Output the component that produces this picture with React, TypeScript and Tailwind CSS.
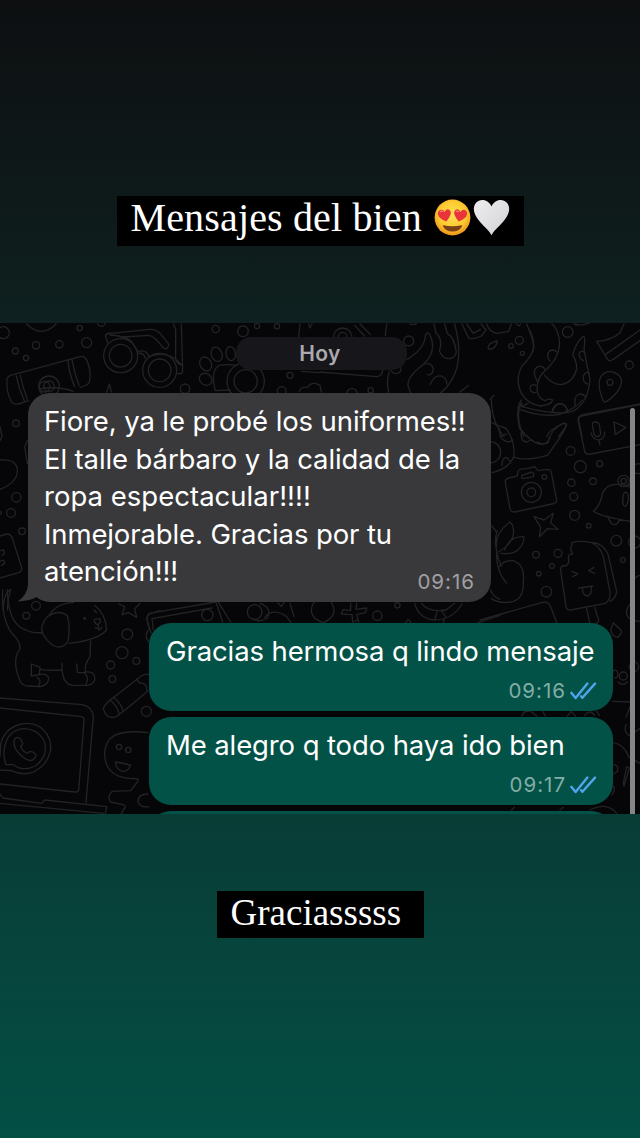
import type { ReactNode } from 'react';

type Dot = [number, number, number];

function Dots({ items }: { items: Dot[] }) {
  return (
    <>
      {items.map(([x, y, r]) => (
        <circle key={`${x}-${y}`} cx={x} cy={y} r={r} />
      ))}
    </>
  );
}

function Region({ x, y, children }: { x: number; y: number; children: ReactNode }) {
  return <g transform={`translate(${x} ${y}) scale(0.33333)`}>{children}</g>;
}

function Doodles() {
  return (
    <svg
      className="col-start-1 row-start-1 h-[491px] w-[640px]"
      viewBox="0 323 640 491"
      fill="none"
      stroke="#232326"
      strokeWidth="4"
      strokeLinecap="round"
      strokeLinejoin="round"
      aria-hidden="true"
    >
      {/* Upper left: candy, glasses, paw */}
      <Region x={0} y={320}>
        <Dots
          items={[
            [10, 38, 18], [239, 24, 8], [304, 8, 11], [108, 76, 11], [178, 73, 11], [260, 68, 15],
            [46, 93, 9], [78, 114, 8], [362, 107, 51], [362, 107, 34], [479, 151, 51], [479, 151, 34],
            [647, 27, 11], [729, 34, 16], [771, 18, 8], [831, 19, 8], [555, 206, 14], [737, 184, 56],
            [737, 184, 35], [870, 166, 9], [845, 213, 13], [147, 199, 31], [147, 199, 16],
          ]}
        />
        <path d="M80 12Q124 56 168 12M21 184Q18 172 32 166L240 110Q252 106 259 118Q276 152 268 186Q264 196 240 202M21 184Q18 214 35 246Q40 254 55 252L86 242M49 168Q56 204 73 242M61 166Q68 202 82 238M204 122Q207 160 224 200M216 118Q223 160 237 196M120 206Q180 198 220 214" />
        <path d="M316 49Q318 38 334 40L450 28Q466 27 480 40L503 68Q510 78 500 85Q492 90 484 76Q462 48 446 46L370 51M316 49L324 70M330 45Q378 48 396 66L412 94Q440 88 447 110M412 100Q432 98 436 114M520 12L527 28L527 112Q524 122 540 134M544 12L548 154Q546 164 530 160M447 110Q486 92 526 116L546 136M320 216L328 192L334 216" />
        <path d="M646 212Q632 158 652 140Q662 130 712 136M646 212L690 210" />
        <ellipse cx="617" cy="132" rx="17" ry="22" transform="rotate(-28 617 132)" />
        <ellipse cx="650" cy="103" rx="16" ry="22" transform="rotate(-20 650 103)" />
        <ellipse cx="692" cy="101" rx="14" ry="21" transform="rotate(-8 692 101)" />
        <ellipse cx="617" cy="178" rx="20" ry="17" transform="rotate(38 617 178)" />
        <path d="M896 50L900 12M926 12L930 24L936 12M898 214Q904 198 922 202Q936 182 960 196M904 154L960 158" />
      </Region>

      {/* Upper right: octopus, pin, voice note */}
      <Region x={320} y={320}>
        <Dots
          items={[
            [68, 52, 28], [68, 50, 13], [266, 63, 15], [228, 146, 15], [598, 61, 12], [573, 78, 7],
            [607, 100, 6], [743, 36, 16], [928, 135, 12], [870, 187, 9], [96, 222, 16], [152, 211, 8],
          ]}
        />
        <path d="M104 16L134 48M120 12L152 44M270 12L282 14L290 10M0 156L170 170Q188 168 188 150M200 12L196 46M262 118Q314 86 316 48Q320 32 330 44Q352 92 312 132Q260 170 264 198L272 218M208 154Q198 184 206 216M342 12L348 40Q370 58 358 92Q370 122 396 114Q412 104 408 92Q404 54 382 40L374 12M404 12Q432 120 396 178Q380 206 362 218M420 216L446 196M510 238L522 226M330 194Q342 164 364 168Q382 176 380 192M318 132Q334 126 340 148Q336 168 322 164M0 196L4 216" />
        <path d="M426 12L446 54Q458 60 484 48L498 30L484 12M440 12L460 40L482 28M500 12Q508 38 534 40L566 34L574 12M588 12L598 18L602 12M504 82Q506 72 518 68L532 62Q528 88 508 88Z" />
        <path d="M620 12Q636 48 642 80Q636 110 606 138Q588 170 598 204Q612 250 662 258Q694 254 698 240Q690 234 674 242Q646 230 652 196Q654 170 680 148Q724 104 718 58Q712 24 696 12M674 166Q698 194 724 194Q762 186 770 146Q770 122 758 106Q766 70 788 50Q798 44 792 88Q800 130 810 180Q804 246 762 272Q718 290 606 260L604 248Q588 282 602 326L612 350M606 260L624 250" />
        <path d="M654 186Q634 156 650 142Q666 132 676 150M690 124Q676 104 690 92Q704 86 712 98M646 218Q632 220 630 204Q632 190 648 196M790 122Q776 114 778 100Q782 90 792 96M804 192Q788 190 790 168Q798 152 808 160M766 256Q760 230 778 222Q792 222 798 234M696 274Q704 246 728 252Q744 260 740 276M630 32Q646 64 638 96M762 12Q782 18 806 10M830 64Q872 62 900 38L912 12M830 64L864 120Q870 126 880 118L960 62M856 104L960 30M850 242Q830 198 842 170Q860 148 884 158Q914 172 900 202Q888 226 860 244Q852 248 850 242M960 254L784 288Q774 292 776 302L786 350M680 350Q686 330 730 310Q742 308 736 322L716 350" />
        <path d="M514 238Q516 310 552 350M540 350L560 342" />
      </Region>

      {/* Right edge: mic note, camera, bell, ice pop */}
      <Region x={480} y={400}>
        <Dots
          items={[
            [272, 153, 13], [301, 200, 18], [359, 191, 9], [274, 248, 11], [339, 244, 10], [281, 290, 12],
            [284, 346, 15], [326, 377, 7], [154, 277, 30], [154, 277, 13], [193, 231, 7], [409, 422, 16],
            [464, 426, 18], [429, 480, 7], [168, 464, 10], [234, 460, 12], [216, 498, 7], [176, 521, 7],
            [199, 575, 16], [431, 243, 17], [431, 243, 8], [30, 157, 32], [474, 206, 15],
          ]}
        />
        <path d="M294 60L314 154Q318 166 332 162L480 134M294 60Q294 48 308 44L480 12M337 74Q336 66 346 66Q356 66 358 74L362 100Q360 110 350 110Q342 108 341 98ZM333 98Q338 120 358 120Q374 116 374 96M356 120L360 134M402 66L438 82L406 104Z" />
        <path d="M76 248Q74 238 86 234L112 228L114 214Q118 206 140 206L164 200L174 212L202 208Q212 208 214 218L230 300Q230 310 216 312L104 336Q94 336 90 326ZM126 226L156 216Q164 220 160 230L130 236Q122 234 126 226M162 350L192 360L220 340L212 368L234 388L202 386L178 410L182 382Z" />
        <path d="M340 334Q362 316 368 278Q382 248 424 254Q450 256 462 272M340 334Q360 350 462 366M384 348Q390 374 404 374Q416 372 418 358M430 284Q434 272 442 280Q450 300 438 318Q428 320 428 304ZM440 260L456 248" />
        <path d="M272 450L276 428Q300 420 334 428Q358 436 370 470L390 576Q392 600 376 610L272 630Q260 632 258 620L242 512Q240 494 256 498Q268 494 266 476Q262 462 278 462ZM334 428Q366 426 384 462L410 574Q408 594 390 604M276 514L294 522L278 530M342 502L326 512L344 520M296 564L338 558M308 564Q306 586 322 588Q336 584 334 562M320 626L330 672M344 622L356 660Q356 668 346 672M400 668L392 690Q398 712 414 712Q428 700 422 690ZM480 526Q460 530 458 552L458 604Q438 620 440 644Q446 662 480 664" />
        <path d="M36 68Q52 78 76 84Q104 114 102 168Q88 206 36 218M58 86Q58 118 78 124Q90 128 98 120M66 196Q66 174 78 172Q88 176 92 190M102 172Q140 184 202 166Q250 102 260 76Q258 66 246 72Q214 88 208 118Q182 160 118 84L114 56Q110 20 124 0M120 28Q188 54 242 42Q290 24 306 0M216 38Q226 8 244 12Q262 20 262 34M124 96Q120 124 140 126L154 120M172 126Q184 136 204 128L208 112" />
        <path d="M50 440Q44 400 90 366Q106 380 98 412Q86 440 56 456M74 450Q88 408 132 410Q132 438 108 454Q90 464 62 460M36 378L48 394M52 392Q42 420 50 452Q46 512 80 550M58 500Q72 480 100 482Q136 496 130 542Q132 594 100 604Q64 614 34 596M50 456Q54 478 64 498M0 660L184 608Q204 602 212 620L230 668" />
      </Region>

      {/* Left edge behind the received bubble */}
      <Region x={0} y={380}>
        <Dots items={[[48, 130, 10], [49, 352, 14], [33, 399, 13], [66, 454, 10], [0, 399, 4], [134, 20, 16]]} />
        <path d="M0 140L6 170L0 182M0 240Q54 236 52 276Q48 310 0 328M82 182L74 200L82 250M0 468L20 462Q34 462 38 478L64 560Q68 574 56 578L0 594M0 512L10 510Q18 520 6 526M0 544Q14 536 14 550L4 556M10 690Q10 640 32 628Q22 660 22 690" />
      </Region>

      {/* Lower left: puppy, laptop, ghost */}
      <Region x={0} y={590}>
        <Dots
          items={[
            [108, 47, 13], [79, 77, 10], [382, 133, 16], [366, 188, 18], [409, 213, 10], [332, 225, 12],
            [337, 267, 10], [439, 364, 15], [357, 471, 8], [385, 480, 8], [254, 85, 3],
          ]}
        />
        <path d="M8 0Q4 90 36 130Q62 156 60 176Q36 208 56 262Q64 290 86 288L122 290Q146 284 146 264Q140 248 118 254L120 232L94 222L94 258L116 254M120 238Q150 242 184 240M22 0Q24 104 78 120Q96 130 126 128M186 220Q184 284 218 286L264 286Q288 280 284 260Q280 244 256 246Q252 226 270 200L272 152M230 222L232 248L256 248M110 262Q126 268 116 288M254 250Q268 262 258 282M128 130Q118 108 142 80Q178 56 202 78Q212 110 204 154Q188 178 162 168Q138 152 128 130M148 76Q168 40 220 38M284 46Q318 74 320 120Q294 150 208 160M284 88L300 86Q304 98 292 104Q280 98 284 88M294 104L296 114M286 112L298 120L306 112M282 60L290 68" />
        <path d="M356 42L374 50L366 74L386 68L410 82L404 56L420 40M0 324L246 344Q278 350 280 380L258 638M0 354L244 380Q254 382 252 392L236 600Q234 608 224 606L0 582M0 612L8 624L126 640L134 630L320 650L316 672M0 640L310 670" />
        <path d="M0 540L34 542Q92 568 134 520Q166 476 142 434Q114 392 64 402Q14 414 2 462L0 500M18 524Q8 500 14 470Q24 420 72 416Q118 418 134 458Q144 500 106 528Q70 546 40 524Z" />
        <path d="M44 446Q34 474 70 502Q92 520 104 504Q114 494 98 486L90 484L82 490Q68 484 62 470L68 462Q64 444 52 442Z" />
        <path d="M310 356Q312 346 328 332L416 264Q434 248 446 254M310 356Q318 386 342 382Q354 380 444 302M330 330Q352 346 358 374M340 322Q362 338 370 364M412 266Q414 282 430 280Q442 286 440 300M446 156Q430 134 448 118Q436 82 446 72L480 62M444 428Q358 418 330 446Q306 476 318 518Q334 568 408 566Q418 566 412 576L392 602L336 604Q320 622 332 636L370 644Q380 650 372 656L364 672M346 516Q368 518 392 526Q382 550 362 542Q348 536 346 516M444 612Q414 612 414 634Q420 654 446 650" />
      </Region>

      {/* Strip between the bubbles */}
      <Region x={140} y={580}>
        <Dots items={[[202, 105, 17], [712, 107, 14], [772, 76, 8], [344, 96, 22]]} />
        <path d="M34 160L20 116Q22 102 40 98L228 66L248 126M40 150L36 116L216 84M236 68L272 126M360 70Q398 84 382 114Q360 128 340 118M374 112Q400 82 440 110L452 128M414 68L424 80L432 68M450 70L462 110M522 68Q504 94 526 116L548 128M574 68Q592 94 570 116L552 128M610 88L632 92L632 70M650 70L648 88L680 84L676 98L650 104L656 126M610 88L604 102L636 104L638 126L652 120M824 70Q834 112 880 120Q938 120 966 72M844 70Q866 98 918 90L944 70M884 120L892 92M918 112L906 94M910 130L912 118M798 128Q804 110 812 128M1014 128L1080 106M1052 30Q1058 50 1080 58" />
      </Region>

      {/* Lower right edge */}
      <Region x={480} y={660}>
        <Dots items={[[430, 48, 12], [462, 20, 14]]} />
        <path d="M398 38Q402 24 412 34Q418 54 404 54M414 66Q428 80 442 66M398 124L456 126L438 172M438 194Q430 218 448 226L480 206M398 248Q432 252 446 290L480 310M400 314Q418 316 412 334L400 342M400 378Q408 390 396 404M430 370L440 320L448 324L432 378ZM126 168Q130 152 146 154M170 168L150 152M196 168L188 154M262 168L274 154L286 168M314 166Q330 146 344 166M350 154L358 166M94 450L104 442M240 450L250 442M330 450Q380 424 410 460" />
      </Region>
    </svg>
  );
}

function Ticks() {
  return (
    <svg className="h-[18px] w-[27px]" viewBox="0 0 27 18" fill="none" stroke="#4fa5ec" strokeWidth="2.4" strokeLinecap="round" strokeLinejoin="round" aria-hidden="true">
      <path d="M1.3 10.8L5.6 16L17.4 1.6M11.1 14.2L12.4 15.8L25 1.6" />
    </svg>
  );
}

function HeartEyes() {
  return (
    <svg className="h-[37px] w-[37px]" viewBox="0 0 37 37" role="img" aria-label="😍">
      <defs>
        <radialGradient id="face" cx="50%" cy="42%" r="58%">
          <stop offset="0" stopColor="#ffe253" />
          <stop offset=".65" stopColor="#fdc92f" />
          <stop offset="1" stopColor="#ee941c" />
        </radialGradient>
      </defs>
      <circle cx="18.5" cy="18.5" r="17.9" fill="url(#face)" />
      <g fill="#e8343a">
        <path d="M12.3 22.4Q5 19.8 4 15.5Q3.4 11.7 6.6 10.8Q9.3 10.4 10.5 13Q12.3 9.4 15.2 10.7Q17.8 12.6 16.3 16.2Q15 19.5 12.3 22.4Z" />
        <path d="M24.7 22.4Q32 19.8 33 15.5Q33.6 11.7 30.4 10.8Q27.7 10.4 26.5 13Q24.7 9.4 21.8 10.7Q19.2 12.6 20.7 16.2Q22 19.5 24.7 22.4Z" />
      </g>
      <path d="M6.5 12.7Q7.5 11.7 8.6 12.4M22.3 12.4Q23.3 11.6 24.3 12.5" stroke="#ff8585" strokeWidth="1.2" fill="none" strokeLinecap="round" />
      <path d="M9.4 26.2Q18.5 28.5 27.6 26.2Q28.4 26.2 27.9 27.5Q25.2 32.4 18.5 32.5Q11.8 32.4 9.1 27.5Q8.6 26.2 9.4 26.2Z" fill="#784116" />
    </svg>
  );
}

function WhiteHeart() {
  return (
    <svg className="h-[37px] w-[37px]" viewBox="0 0 37 37" role="img" aria-label="🤍">
      <defs>
        <linearGradient id="heart" x1="0" y1="0" x2="1" y2="1">
          <stop offset="0" stopColor="#ededee" />
          <stop offset="1" stopColor="#d3d3d7" />
        </linearGradient>
      </defs>
      <path d="M18.5 36.2C15.6 30.6 10 27 5.3 20.7C.8 14.9-.8 9 2.8 4.1C7.3-1.3 15.8.5 18.5 7.5C21.2.5 29.7-1.3 34.2 4.1C37.8 9 36.2 14.9 31.7 20.7C27 27 21.4 30.6 18.5 36.2Z" fill="url(#heart)" />
    </svg>
  );
}

function Sent({ text, time }: { text: string; time: string }) {
  return (
    <div className="flex h-[88px] w-[464px] flex-col rounded-[22px] bg-[#035247] pt-[9px] pr-[16px] pl-[17px] text-white">
      <p className="text-[27.5px] leading-[39px] tracking-[-0.11px] whitespace-nowrap">{text}</p>
      <div className="flex items-center justify-end gap-[4px] pt-[8px]">
        <span className="text-[20.5px] leading-6 tracking-[1px] text-[#82ada6]">{time}</span>
        <Ticks />
      </div>
    </div>
  );
}

export default function App() {
  return (
    <main className="flex h-[1138px] w-[640px] flex-col items-center overflow-hidden bg-linear-to-b from-[#0d0f11] via-[#092f2b] to-[#034f45] font-['Inter',sans-serif]">
      <header className="flex h-[323px] flex-col pt-[196px]">
        <div className="flex h-[50px] w-[407px] bg-black pt-[2px] pl-[14px] text-white">
          <h1 className="w-[289px] font-['Liberation_Serif',serif] text-[40px] leading-[40px] tracking-[0.15px] whitespace-nowrap">Mensajes del bien</h1>
          <div className="flex gap-[2px] pt-px pl-[14px]">
            <HeartEyes />
            <WhiteHeart />
          </div>
        </div>
      </header>

      <section className="grid h-[491px] w-[640px] shrink-0 overflow-hidden bg-[#060609]">
        <Doodles />
        <div className="z-10 col-start-1 row-start-1 flex h-[491px]">
          <div className="flex w-[630px] flex-col">
            <div className="mt-[14px] ml-[236px] flex h-[33px] w-[171px] justify-center rounded-[15px] bg-[#17171b]">
              <span className="pr-[3px] text-[21px] leading-[34px] font-semibold tracking-[0.4px] text-[#aaaaaf]">Hoy</span>
            </div>
            <div className="mt-[23px] flex h-[209px] shrink-0 items-end">
              <svg className="-mr-[13px] ml-[17px] h-[30px] w-[24px]" viewBox="0 0 24 30" aria-hidden="true">
                <path d="M11 0V13Q10 23 1 29.2Q10 30 18 26L24 20V0Z" fill="#39393b" />
              </svg>
              <div className="grid h-[209px] w-[463px] rounded-[22px] bg-[#39393b] pt-[10px] pr-[16px] pl-[16px] text-white">
                <p className="col-start-1 row-start-1 text-[27.5px] leading-[37.5px] tracking-[-0.11px] whitespace-nowrap">
                  Fiore, ya le probé los uniformes!!
                  <br />
                  El talle bárbaro y la calidad de la
                  <br />
                  <span className="tracking-[0.02px]">ropa espectacular!!!!</span>
                  <br />
                  Inmejorable. Gracias por tu
                  <br />
                  atención!!!
                </p>
                <span className="col-start-1 row-start-1 self-end justify-self-end pb-[8px] text-[20.5px] leading-6 tracking-[1px] text-[#a0a0a3]">09:16</span>
              </div>
            </div>
            <div className="mt-[21px] ml-[149px] flex shrink-0 flex-col gap-[6px]">
              <Sent text="Gracias hermosa q lindo mensaje" time="09:16" />
              <Sent text="Me alegro q todo haya ido bien" time="09:17" />
              <div className="h-[60px] w-[464px] rounded-[22px] bg-[#035247]" />
            </div>
          </div>
          <div className="mt-[85px] w-[5px] shrink-0 rounded-t-full bg-[#858587]" />
        </div>
      </section>

      <footer className="flex flex-col pt-[77px]">
        <div className="h-[47px] w-[207px] bg-black pl-[14px] text-white">
          <h2 className="font-['Liberation_Serif',serif] text-[37px] leading-[43px]">Graciasssss</h2>
        </div>
      </footer>
    </main>
  );
}
